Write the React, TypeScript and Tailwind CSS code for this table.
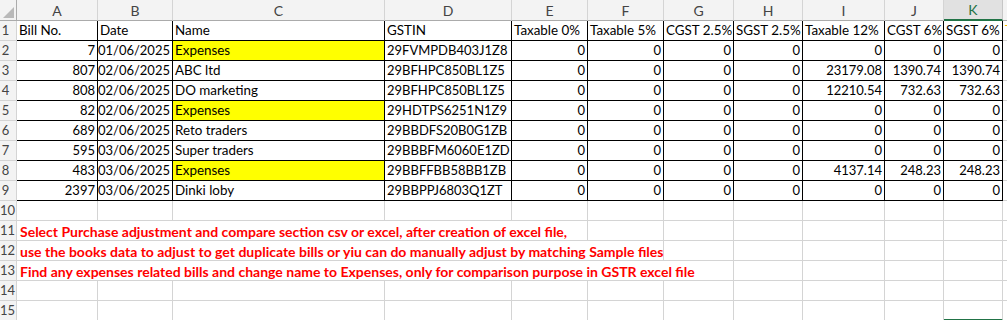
import React from "react";

const cols = [
  { id: "A", w: "w-[81px]" },
  { id: "B", w: "w-[75px]" },
  { id: "C", w: "w-[212px]" },
  { id: "D", w: "w-[127px]" },
  { id: "E", w: "w-[76px]" },
  { id: "F", w: "w-[76px]" },
  { id: "G", w: "w-[70px]" },
  { id: "H", w: "w-[69px]" },
  { id: "I", w: "w-[82px]" },
  { id: "J", w: "w-[59px]" },
  { id: "K", w: "w-[59px]" },
  { id: "L", w: "w-[60px]" },
];

type Bill = {
  no: string;
  date: string;
  name: string;
  gstin: string;
  amounts: string[];
  expense?: boolean;
};

const bills: Bill[] = [
  { no: "7", date: "01/06/2025", name: "Expenses", gstin: "29FVMPDB403J1Z8", amounts: ["0", "0", "0", "0", "0", "0", "0"], expense: true },
  { no: "807", date: "02/06/2025", name: "ABC ltd", gstin: "29BFHPC850BL1Z5", amounts: ["0", "0", "0", "0", "23179.08", "1390.74", "1390.74"] },
  { no: "808", date: "02/06/2025", name: "DO marketing", gstin: "29BFHPC850BL1Z5", amounts: ["0", "0", "0", "0", "12210.54", "732.63", "732.63"] },
  { no: "82", date: "02/06/2025", name: "Expenses", gstin: "29HDTPS6251N1Z9", amounts: ["0", "0", "0", "0", "0", "0", "0"], expense: true },
  { no: "689", date: "02/06/2025", name: "Reto traders", gstin: "29BBDFS20B0G1ZB", amounts: ["0", "0", "0", "0", "0", "0", "0"] },
  { no: "595", date: "03/06/2025", name: "Super traders", gstin: "29BBBFM6060E1ZD", amounts: ["0", "0", "0", "0", "0", "0", "0"] },
  { no: "483", date: "03/06/2025", name: "Expenses", gstin: "29BBFFBB58BB1ZB", amounts: ["0", "0", "0", "0", "4137.14", "248.23", "248.23"], expense: true },
  { no: "2397", date: "03/06/2025", name: "Dinki loby", gstin: "29BBPPJ6803Q1ZT", amounts: ["0", "0", "0", "0", "0", "0", "0"] },
];

const headings = ["Bill No.", "Date", "Name", "GSTIN", "Taxable 0%", "Taxable 5%", "CGST 2.5%", "SGST 2.5%", "Taxable 12%", "CGST 6%", "SGST 6%"];

const notes = [
  { text: "Select Purchase adjustment and compare section csv or excel, after creation of excel file,", span: 5 },
  { text: "use the books data to adjust to get duplicate bills or yiu can do manually adjust by matching Sample files", span: 6 },
  { text: "Find any expenses related bills and change name to Expenses, only for comparison purpose in GSTR excel file", span: 7 },
];

function RowNum({ n }: { n: number }) {
  return (
    <div className="w-[17px] h-[20px] shrink-0 bg-[#f3f3f3] border-r border-b border-[#d4d4d4] text-[#444] flex items-end pb-[1px] overflow-hidden">
      <span className="w-[11px] text-center shrink-0">{n}</span>
    </div>
  );
}

// grid cell: black borders inside the bill table, gray gridlines elsewhere
function Cell({ w, children, right, black, yellow, extra }: { w: string; children?: React.ReactNode; right?: boolean; black?: boolean; yellow?: boolean; extra?: string }) {
  return (
    <div
      className={`${w} h-[20px] shrink-0 border-r border-b flex items-end pb-[1px] px-[2px] whitespace-nowrap overflow-hidden ${
        black ? "border-black" : "border-[#d4d4d4]"
      } ${yellow ? "bg-[#ffff00]" : ""} ${right ? "justify-end" : ""} ${extra ?? ""}`}
    >
      {children}
    </div>
  );
}

export default function App() {
  return (
    <div className="w-[1007px] h-[320px] overflow-hidden bg-white text-[13px] leading-[17px] text-black" style={{ fontFamily: "Lato, 'Open Sans', sans-serif" }}>
      {/* Column letters */}
      <div className="flex h-[21px]">
        <div className="w-[17px] shrink-0 bg-[#f3f3f3] border-r border-b border-[#ababab] relative">
          <div className="absolute right-[2px] bottom-[2px] w-0 h-0 border-l-[11px] border-l-transparent border-b-[11px] border-b-[#b9b9b9]" />
        </div>
        {cols.map((c) =>
          c.id === "K" ? (
            <div key={c.id} className={`${c.w} shrink-0 bg-[#e1e1e1] border-r border-[#c6c6c6] border-b-2 border-b-[#217346] text-[#217346] text-[14px] flex items-center justify-center`}>
              {c.id}
            </div>
          ) : (
            <div key={c.id} className={`${c.w} shrink-0 bg-[#f3f3f3] border-r border-b border-r-[#d4d4d4] border-b-[#ababab] text-[#444] text-[14px] flex items-center justify-center`}>
              {c.id}
            </div>
          )
        )}
      </div>

      {/* Row 1: headings */}
      <div className="flex">
        <RowNum n={1} />
        {headings.map((h, i) => (
          <Cell key={h} w={cols[i].w} black>
            <span className="text-[13.4px]">{h}</span>
          </Cell>
        ))}
        <Cell w={cols[11].w}>
          <span className="text-[#f4b400]">Taxable 18%</span>
        </Cell>
      </div>

      {/* Bills */}
      {bills.map((b, r) => (
        <div key={r} className="flex">
          <RowNum n={r + 2} />
          <Cell w={cols[0].w} black right>{b.no}</Cell>
          <Cell w={cols[1].w} black right>{b.date}</Cell>
          <Cell w={cols[2].w} black yellow={b.expense}><span className="text-[13.4px]">{b.name}</span></Cell>
          <Cell w={cols[3].w} black>{b.gstin}</Cell>
          {b.amounts.map((a, i) => (
            <Cell key={i} w={cols[4 + i].w} black right>{a}</Cell>
          ))}
          <Cell w={cols[11].w} />
        </div>
      ))}

      {/* Row 10 */}
      <div className="flex">
        <RowNum n={10} />
        {cols.map((c) => (
          <Cell key={c.id} w={c.w} />
        ))}
      </div>

      {/* Notes */}
      {notes.map((note, r) => {
        const spanW = cols.slice(0, note.span);
        return (
          <div key={r} className="flex">
            <RowNum n={11 + r} />
            <div className="flex shrink-0 relative">
              {spanW.map((c, i) => (
                <div key={c.id} className={`${c.w} h-[20px] shrink-0 border-b border-[#d4d4d4] ${i === spanW.length - 1 ? "border-r" : ""}`} />
              ))}
              <span className="absolute left-[3px] bottom-[1px] font-bold text-[14px] text-[#ff0000] whitespace-nowrap">{note.text}</span>
            </div>
            {cols.slice(note.span).map((c) => (
              <Cell key={c.id} w={c.w} />
            ))}
          </div>
        );
      })}

      {/* Rows 14-15 */}
      {[14, 15].map((n) => (
        <div key={n} className="flex">
          <RowNum n={n} />
          {cols.map((c) => (
            <Cell key={c.id} w={c.w} extra={n === 15 && c.id === "K" ? "border-b-2 border-b-[#217346]" : ""} />
          ))}
        </div>
      ))}
    </div>
  );
}
